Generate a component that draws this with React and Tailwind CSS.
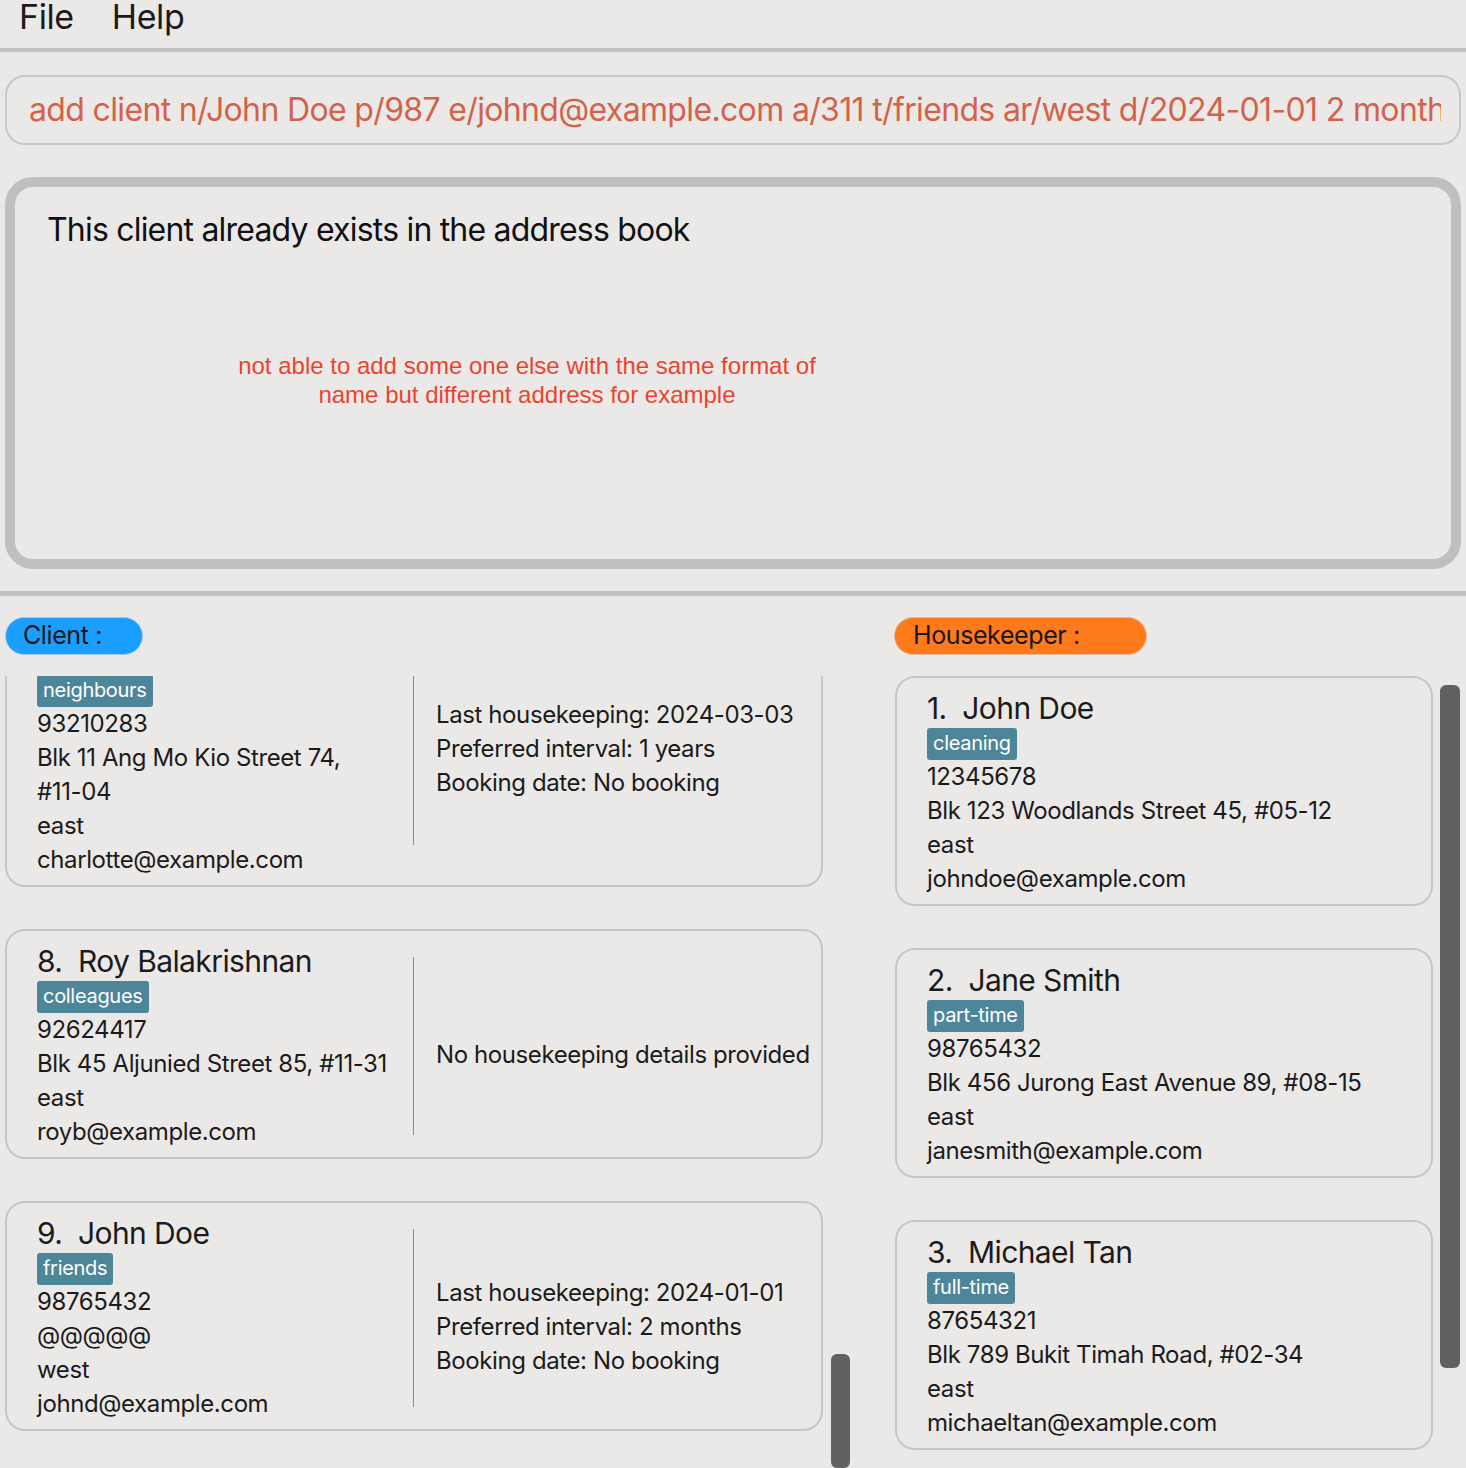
import React from 'react'

const leftCards = [
  {
    name: 'Charlotte Oliveiro',
    idx: 7,
    tag: 'neighbours',
    lines: ['93210283', 'Blk 11 Ang Mo Kio Street 74,', '#11-04', 'east', 'charlotte@example.com'],
    shift: 'mt-[-16px]',
    divider: 'h-[196px] mt-[12px] self-start',
    clip: 'mt-[-53px]',
    details: ['Last housekeeping: 2024-03-03', 'Preferred interval: 1 years', 'Booking date: No booking'],
  },
  {
    name: 'Roy Balakrishnan',
    idx: 8,
    tag: 'colleagues',
    lines: ['92624417', 'Blk 45 Aljunied Street 85, #11-31', 'east', 'royb@example.com'],
    details: ['No housekeeping details provided'],
    shift: 'mt-[18px]',
    divider: 'h-[178px] self-center',
    clip: 'mt-[42px]',
  },
  {
    name: 'John Doe',
    idx: 9,
    tag: 'friends',
    lines: ['98765432', '@@@@@', 'west', 'johnd@example.com'],
    details: ['Last housekeeping: 2024-01-01', 'Preferred interval: 2 months', 'Booking date: No booking'],
    shift: 'mt-[18px]',
    divider: 'h-[178px] self-center',
    clip: 'mt-[42px]',
  },
]

const keepers = [
  { idx: 1, name: 'John Doe', tag: 'cleaning', lines: ['12345678', 'Blk 123 Woodlands Street 45, #05-12', 'east', 'johndoe@example.com'] },
  { idx: 2, name: 'Jane Smith', tag: 'part-time', lines: ['98765432', 'Blk 456 Jurong East Avenue 89, #08-15', 'east', 'janesmith@example.com'] },
  { idx: 3, name: 'Michael Tan', tag: 'full-time', lines: ['87654321', 'Blk 789 Bukit Timah Road, #02-34', 'east', 'michaeltan@example.com'] },
]

function Head({ idx, name }){
  return (
    <div className="h-[36px] leading-[36px] text-[30px] tracking-[-0.6px] text-[#1b1b1b] whitespace-nowrap">
      {idx}.&nbsp;&nbsp;{name}
    </div>
  )
}

function Tag({ children }){
  return (
    <div className="mt-[2px] self-start h-[32px] leading-[31px] px-[6px] rounded-[3px] bg-[#4e8699] text-white text-[20px] tracking-[-0.3px]">
      {children}
    </div>
  )
}

function Lines({ lines }){
  return lines.map((l, i) => (
    <div key={i} className="h-[34px] leading-[34px] text-[24px] tracking-[-0.4px] text-[#1b1b1b] whitespace-nowrap">{l}</div>
  ))
}

function ClientCard({ c }){
  return (
    <div className={`${c.clip} border-2 border-[#c6c6c6] rounded-[20px] flex pb-[8px] pt-[12px]`}>
      <div className="w-[406px] pl-[30px] flex flex-col">
        <Head idx={c.idx} name={c.name} />
        <Tag>{c.tag}</Tag>
        <Lines lines={c.lines} />
      </div>
      <div className={`w-px bg-[#8c8c8c] ${c.divider}`} />
      <div className={`pl-[22px] self-center ${c.shift} flex flex-col`}>
        <Lines lines={c.details} />
      </div>
    </div>
  )
}

function KeeperCard({ k, first }){
  return (
    <div className={`${first ? '' : 'mt-[42px]'} border-2 border-[#c6c6c6] rounded-[20px] pl-[30px] pt-[12px] pb-[8px] flex flex-col`}>
      <Head idx={k.idx} name={k.name} />
      <Tag>{k.tag}</Tag>
      <Lines lines={k.lines} />
    </div>
  )
}

export default function App(){
  return (
    <div className="relative w-[1466px] h-[1468px] overflow-hidden bg-[#ebe9e7] flex flex-col" style={{ fontFamily: 'Inter, "Noto Sans", sans-serif' }}>
      {/* menu bar */}
      <div className="h-[48px] flex items-start gap-[38px] pl-[19px] border-b-4 border-[#c0c0c0] box-content overflow-hidden">
        <span className="text-[34px] leading-none mt-[0px] text-[#1b1b1b] tracking-[-0.4px]">File</span>
        <span className="text-[34px] leading-none mt-[0px] text-[#1b1b1b] tracking-[-0.4px]">Help</span>
      </div>

      {/* command box */}
      <div className="mt-[23px] mx-[5px] h-[70px] rounded-[20px] border-2 border-[#c8c8c8] flex items-center pl-[22px] pr-[18px]">
        <div className="flex-1 overflow-hidden">
          <span className="text-[32px] tracking-[-0.65px] text-[#d3624b] whitespace-nowrap">
            add client n/John Doe p/987 e/johnd@example.com a/311 t/friends ar/west d/2024-01-01 2 months
          </span>
        </div>
      </div>

      {/* result box */}
      <div className="mt-[32px] mx-[5px] h-[392px] rounded-[28px] border-[10px] border-[#bfbfbf] pl-[32px] pt-[19px]">
        <div className="text-[32px] tracking-[-0.8px] text-[#111]">This client already exists in the address book</div>
      </div>

      <div className="absolute left-[197px] top-[351px] w-[660px] text-center text-[24px] leading-[29px] text-[#ea4430]" style={{ fontFamily: '"Liberation Sans", Arial, sans-serif' }}>
        not able to add some one else with the same format of<br />name but different address for example
      </div>

      <div className="mt-[22px] h-[5px] bg-[#c0c0c0]" />

      {/* lists */}
      <div className="flex flex-1 min-h-0">
        <div className="w-[850px] pl-[5px] flex flex-col">
          <div className="mt-[21px] w-[138px] h-[38px] rounded-full bg-[#1a9eff] border border-[#aac6e0] pl-[17px] flex items-center text-[25px] tracking-[-0.4px] text-[#161616]">
            Client :
          </div>
          <div className="mt-[21px] flex flex-1 min-h-0">
            <div className="w-[818px] overflow-hidden flex flex-col">
              {leftCards.map(c => <ClientCard key={c.idx} c={c} />)}
            </div>
            <div className="ml-[8px] w-[19px] flex flex-col">
              <div className="mt-[678px] flex-1 rounded-[6px] bg-[#616161]" />
            </div>
          </div>
        </div>

        <div className="ml-[44px] w-[566px] flex flex-col">
          <div className="mt-[21px] w-[253px] h-[38px] rounded-full bg-[#ff7a1a] border border-[#dcb9a0] pl-[18px] flex items-center text-[25px] tracking-[-0.4px] text-[#161616]">
            Housekeeper :
          </div>
          <div className="mt-[21px] flex flex-1 min-h-0">
            <div className="ml-px w-[538px] overflow-hidden flex flex-col">
              {keepers.map((k, i) => <KeeperCard key={k.idx} k={k} first={i === 0} />)}
            </div>
            <div className="ml-[7px] w-[20px] flex flex-col">
              <div className="mt-[9px] h-[683px] rounded-[6px] bg-[#616161]" />
            </div>
          </div>
        </div>
      </div>
    </div>
  )
}
